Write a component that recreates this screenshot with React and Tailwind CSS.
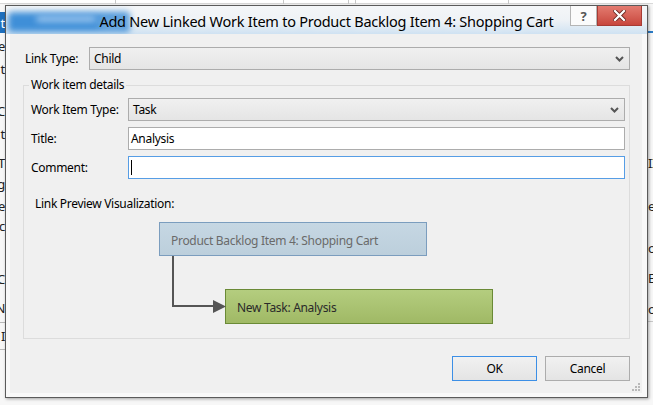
import React from "react";

function Chevron() {
  return (
    <svg width="9" height="6" viewBox="0 0 9 6" className="block">
      <polyline points="1,1 4.5,4.5 8,1" fill="none" stroke="#555" strokeWidth="2" />
    </svg>
  );
}

function Select({ value, className = "" }) {
  return (
    <div
      className={
        "flex h-[23px] items-center justify-between border border-[#acacac] bg-gradient-to-b from-[#f0f0f0] to-[#e5e5e5] pl-[4px] pr-[5px] " +
        className
      }
    >
      <span>{value}</span>
      <Chevron />
    </div>
  );
}

function Background() {
  const left = [
    ["t", 15, "text-white"],
    ["e", 38, ""],
    ["t", 61, ""],
    ["C", 103, ""],
    ["t", 126, ""],
    ["T", 155, ""],
    ["g", 176, ""],
    ["e", 198, ""],
    ["sc", 218, ""],
    ["C", 271, ""],
    ["N", 300, "text-[#7a1010]"],
    ["I", 328, ""],
  ];
  const right = [
    ["II", 155, ""],
    ["e", 198, ""],
    ["o", 240, ""],
    ["E", 270, "text-[#1c5fa8]"],
    ["o", 301, ""],
  ];
  return (
    <>
      <div className="absolute left-0 top-0 h-[405px] w-[653px] bg-[#f7f7f7]" />
      <div className="absolute left-0 top-0 h-[4px] w-[653px] border-b border-[#d9d9d9] bg-white" />
      <div className="absolute left-[115px] top-0 h-[4px] w-px bg-[#c8c8c8]" />
      <div className="absolute left-[283px] top-0 h-[4px] w-px bg-[#c8c8c8]" />
      <div className="absolute left-[348px] top-0 h-[4px] w-px bg-[#c8c8c8]" />
      <div className="absolute left-[355px] top-0 h-[4px] w-px bg-[#c8c8c8]" />
      <div className="absolute left-[508px] top-0 h-[4px] w-px bg-[#c8c8c8]" />
      <div className="absolute left-0 top-[12px] h-[21px] w-[6px] bg-[#1e6fbd]" />
      <div className="absolute left-0 top-[322px] h-[28px] w-[6px] border-y border-[#b9b9b9]" />
      <div className="absolute left-[648px] top-[31px] h-[2px] w-[6px] bg-[#2a7bc6]" />
      <div className="absolute left-[648px] top-[321px] h-px w-[6px] bg-[#c8c8c8]" />
      {left.map(([t, y, c], i) => (
        <span
          key={"l" + i}
          className={"absolute right-[648px] text-[13px] leading-[16px] text-[#222] " + c}
          style={{ top: y }}
        >
          {t}
        </span>
      ))}
      {right.map(([t, y, c], i) => (
        <span
          key={"r" + i}
          className={"absolute left-[648px] text-[13px] leading-[16px] text-[#222] " + c}
          style={{ top: y }}
        >
          {t}
        </span>
      ))}
    </>
  );
}

export default function App() {
  return (
    <div className="relative h-[405px] w-[653px] overflow-hidden font-['Noto_Sans',sans-serif] text-[12px] leading-[16px] tracking-[-0.3px] text-black">
      <Background />
      <div className="absolute left-[5px] top-[5px] flex h-[393px] w-[643px] flex-col border border-[#5a5a5a] bg-[#f8f8f8] shadow-[1px_1px_3px_rgba(0,0,0,0.35)]">
        {/* Title bar */}
        <div className="relative h-[28px] shrink-0 overflow-hidden bg-gradient-to-b from-[#f4f6f8] via-[#eef2f6] to-[#cfe2f2]">
          <div className="absolute left-[2px] top-[6px] h-[20px] w-[122px] rounded-[4px] bg-[#3f8fd8] blur-[3px]" />
          <div className="absolute left-[30px] top-[10px] h-[6px] w-[60px] rounded bg-[#9cc6ee] blur-[3px]" />
          <div className="relative z-10 flex h-full items-center justify-center pt-[1px]">
            <span className="text-[14.5px] leading-[20px] tracking-[-0.25px] text-black [text-shadow:0_0_8px_rgba(255,255,255,0.9)]">
              Add New Linked Work Item to Product Backlog Item 4: Shopping Cart
            </span>
          </div>
          <div className="absolute right-[5px] top-[-1px] z-20 flex h-[21px]">
            <div className="flex w-[27px] items-center justify-center border border-[#b5b5b5] bg-[#fbfbfb] text-[13px] font-bold text-[#555]">
              ?
            </div>
            <div className="flex w-[45px] items-center justify-center border border-[#a73b34] bg-gradient-to-b from-[#e37b70] to-[#c8463d]">
              <svg width="13" height="11" viewBox="0 0 13 11">
                <path d="M2 1 L11 10 M11 1 L2 10" stroke="#6b2a24" strokeWidth="4" strokeLinecap="square" />
                <path d="M2 1 L11 10 M11 1 L2 10" stroke="#fff" strokeWidth="2.2" strokeLinecap="square" />
              </svg>
            </div>
          </div>
        </div>

        {/* Client area */}
        <div className="relative ml-[4px] mr-[5px] flex h-[359px] flex-col bg-[#f0f0f0] pl-[13px] pr-[12px] pt-[13px]">
          <div className="flex h-[23px] items-center">
            <span className="w-[66px] shrink-0 pl-[2px]">Link Type:</span>
            <Select value="Child" className="flex-1" />
          </div>

          <fieldset className="mt-[7px] border border-[#dcdcdc] pb-[14px] pl-[7px] pr-[4px]">
            <legend className="-ml-[2px] px-[2px] leading-[16px]">Work item details</legend>
            <div className="mt-[5px] flex flex-col gap-[6px]">
              <div className="flex h-[23px] items-center">
                <span className="w-[97px] shrink-0">Work Item Type:</span>
                <Select value="Task" className="flex-1" />
              </div>
              <div className="flex h-[23px] items-center">
                <span className="w-[97px] shrink-0">Title:</span>
                <div className="flex h-[23px] flex-1 items-center border border-[#acacac] bg-white pl-[2px]">
                  Analysis
                </div>
              </div>
              <div className="flex h-[23px] items-center">
                <span className="w-[97px] shrink-0">Comment:</span>
                <div className="flex h-[23px] flex-1 items-center border border-[#569de5] bg-white pl-[2px]">
                  <span className="h-[15px] w-px bg-black" />
                </div>
              </div>
            </div>

            <div className="mt-[17px] pl-[4px]">Link Preview Visualization:</div>

            <div className="relative mt-[10px]">
              <div className="ml-[128px] flex h-[34px] w-[268px] items-center border border-[#7b9dbe] bg-gradient-to-b from-[#c6d7e3] to-[#bccfdc] pl-[11px] pt-[3px] text-[#6a6a6a]">
                Product Backlog Item 4: Shopping Cart
              </div>
              <div className="ml-[194px] mt-[33px] flex h-[35px] w-[268px] items-center border border-[#6a8a36] bg-gradient-to-b from-[#b4cd7f] to-[#a0b965] pl-[11px] pt-[3px] text-[#2a2a2a]">
                New Task: Analysis
              </div>
              <svg className="absolute left-0 top-0" width="200" height="95" viewBox="0 0 200 95">
                <polyline points="142,34 142,84 183,84" fill="none" stroke="#555" strokeWidth="2" />
                <polygon points="182,78 195,84.5 182,91" fill="#555" />
              </svg>
            </div>
          </fieldset>

          <div className="mt-[17px] flex justify-end gap-[8px]">
            <button className="flex h-[25px] w-[85px] items-center justify-center border border-[#3c8fe6] bg-gradient-to-b from-[#f1f1f1] to-[#e4e4e4] text-[12px]">
              OK
            </button>
            <button className="flex h-[25px] w-[85px] items-center justify-center border border-[#acacac] bg-gradient-to-b from-[#f1f1f1] to-[#e4e4e4] text-[12px]">
              Cancel
            </button>
          </div>

          <svg className="absolute bottom-[2px] right-[2px]" width="8" height="8" viewBox="0 0 8 8">
            <rect x="6" y="0" width="2" height="2" fill="#b8b8b8" />
            <rect x="3" y="3" width="2" height="2" fill="#b8b8b8" />
            <rect x="6" y="3" width="2" height="2" fill="#b8b8b8" />
            <rect x="0" y="6" width="2" height="2" fill="#b8b8b8" />
            <rect x="3" y="6" width="2" height="2" fill="#b8b8b8" />
            <rect x="6" y="6" width="2" height="2" fill="#b8b8b8" />
          </svg>
        </div>
      </div>
    </div>
  );
}
